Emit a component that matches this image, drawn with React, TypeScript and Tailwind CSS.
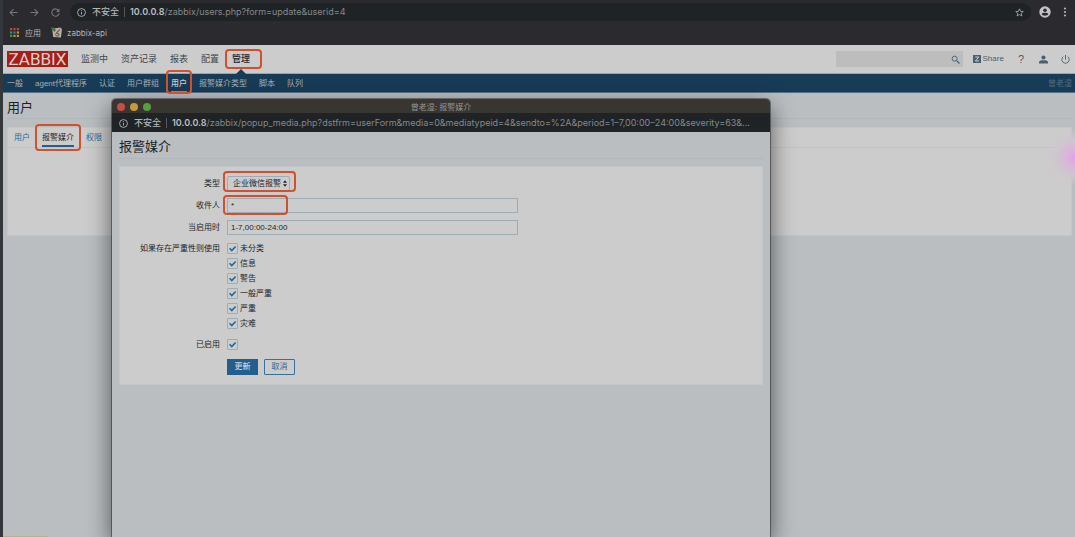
import type { ReactNode } from "react";
import clsx from "clsx";

const topMenu = ["监测中", "资产记录", "报表", "配置", "管理"];
const subMenu = ["一般", "agent代理程序", "认证", "用户群组", "用户", "报警媒介类型", "脚本", "队列"];
const severities = ["未分类", "信息", "警告", "一般严重", "严重", "灾难"];
const appDots = ["#b8473c", "#b8473c", "#b8473c", "#3f9a57", "#4274b8", "#b99a38", "#3f9a57", "#b99a38", "#b99a38"];

const Mark = ({ className }: { className: string }) => (
  <span
    aria-hidden="true"
    className={clsx("pointer-events-none absolute z-10 rounded-[4px] border-2 border-[#cf5130]", className)}
  />
);

const InfoIcon = () => (
  <svg viewBox="0 0 16 16" className="size-[9px] shrink-0" fill="none" stroke="currentColor" strokeWidth="1.6">
    <circle cx="8" cy="8" r="7" />
    <path d="M8 7v4.5M8 4v1.6" />
  </svg>
);

const BrowserBar = () => (
  <header className="flex h-[45px] shrink-0 flex-col bg-[#2b2a2e] font-[Inter,'Noto_Sans_CJK_SC',sans-serif] text-[#b4b4b5]">
    <div className="flex h-6 items-center pl-1.5 pr-2">
      <div className="flex w-[61px] gap-3 text-[#77787a]">
        <button aria-label="后退">
          <svg viewBox="0 0 16 16" className="size-[9px]" fill="none" stroke="currentColor" strokeWidth="1.8">
            <path d="M15 8H2M8 2 2 8l6 6" />
          </svg>
        </button>
        <button aria-label="前进">
          <svg viewBox="0 0 16 16" className="size-[9px]" fill="none" stroke="currentColor" strokeWidth="1.8">
            <path d="M1 8h13M8 2l6 6-6 6" />
          </svg>
        </button>
        <button aria-label="重新加载">
          <svg viewBox="0 0 16 16" className="size-[9px]" fill="none" stroke="currentColor" strokeWidth="1.8">
            <path d="M13.5 4.5A6.5 6.5 0 1 0 14.5 9" />
            <path d="M15 1v6H9z" fill="currentColor" stroke="none" />
          </svg>
        </button>
      </div>
      <div className="flex h-[18px] flex-1 items-center rounded-full bg-[#1f2326] px-[7px] text-[9px]">
        <InfoIcon />
        <span className="ml-1.5 font-medium">不安全</span>
        <span className="mx-[5px] h-2.5 w-px bg-[#55585a]" />
        <span className="flex-1 text-[#85888a]">
          <b className="font-semibold text-[#bdbebf]">10.0.0.8</b>/zabbix/users.php?form=update&amp;userid=4
        </span>
        <button aria-label="收藏">
          <svg viewBox="0 0 16 16" className="size-[9px]" fill="none" stroke="currentColor" strokeWidth="1.4">
            <path d="m8 1.5 1.9 4.4 4.8.4-3.6 3.2 1.1 4.7L8 11.7l-4.2 2.5 1.1-4.7L1.3 6.3l4.8-.4z" />
          </svg>
        </button>
      </div>
      <button aria-label="个人资料" className="ml-2">
        <svg viewBox="0 0 16 16" className="size-3">
          <circle cx="8" cy="8" r="7.6" fill="#c4c4c4" />
          <circle cx="8" cy="5.6" r="2.4" fill="#2b2a2e" />
          <path d="M3.4 10.8c1.4-2.3 7.8-2.3 9.2 0-1.7 3-7.5 3-9.2 0z" fill="#2b2a2e" />
        </svg>
      </button>
      <button aria-label="菜单" className="ml-3">
        <svg viewBox="0 0 8 20" className="h-2.5 w-1 fill-current">
          <circle cx="4" cy="3" r="2.2" />
          <circle cx="4" cy="10" r="2.2" />
          <circle cx="4" cy="17" r="2.2" />
        </svg>
      </button>
    </div>
    <div className="flex h-[17px] items-center pl-[7px] text-[8px]">
      <a href="#apps" className="flex items-center gap-1.5">
        <svg viewBox="0 0 9 9" className="size-[9px]">
          {appDots.map((color, i) => (
            <rect key={i} x={(i % 3) * 3.4} y={Math.floor(i / 3) * 3.4} width="2.2" height="2.2" fill={color} />
          ))}
        </svg>
        应用
      </a>
      <a href="#api" className="ml-2.5 flex items-center gap-[5px]">
        <svg viewBox="0 0 20 20" className="size-[11px]">
          <path d="M2 3 17 1l3 3-2 15-14-1z" fill="#b3b2a8" />
          <path d="M0 1c5-1 8 1 9 5L6 9C4 7 1 5 0 1z" fill="#526f42" />
          <path d="M9 10 16 3l1 2-7 8z" fill="#a8493c" />
          <path d="M7 12c3-2 7-1 9 1l-3 5c-4 0-6-2-6-6z" fill="#58704b" />
          <path d="m8 13 5 2" stroke="#d0cec2" strokeWidth="1.5" />
        </svg>
        zabbix-api
      </a>
    </div>
  </header>
);

const SiteHeader = () => (
  <div className="flex h-[29px] shrink-0 items-center border-b border-[#9aa4aa] bg-[#cccccc] pl-1 pr-[5px]">
    <a
      href="#home"
      className="flex h-4 w-[61px] items-center justify-center bg-[#a81e14] font-[Roboto,sans-serif] text-[17px] leading-4 text-[#d6cfce]"
    >
      ZABBIX
    </a>
    <nav className="ml-[13px] flex h-full gap-[13px] text-[9px] text-[#42474b]">
      {topMenu.map((item) => (
        <a key={item} href="#menu" className={clsx("relative flex items-center pt-0.5", item === "管理" && "font-medium text-[#1c2328]")}>
          {item}
          {item === "管理" && (
            <>
              <span className="absolute -bottom-px left-1/2 -translate-x-1/2 border-x-[5px] border-b-[5px] border-x-transparent border-b-[#183b56]" />
              <Mark className="-left-[7px] -right-3 top-1 h-5" />
            </>
          )}
        </a>
      ))}
    </nav>
    <div className="ml-auto flex items-center text-[#4b5f6c]">
      <label className="flex h-4 w-[127px] items-center bg-[#bdbdbd] pr-[3px]">
        <input type="search" aria-label="搜索" className="h-4 min-w-0 flex-1 bg-transparent px-1 text-[8px] outline-none" />
        <svg viewBox="0 0 16 16" className="size-[9px]" fill="none" stroke="currentColor" strokeWidth="1.6">
          <circle cx="6.5" cy="6.5" r="4.5" />
          <path d="m10 10 5 5" strokeWidth="2.2" />
        </svg>
      </label>
      <a href="#share" className="ml-2.5 flex items-center gap-0.5 text-[8px]">
        <svg viewBox="0 0 8 8" className="size-2">
          <path d="M0 0h8v8H0z" fill="currentColor" />
          <path d="M2.2 2h3.6L2.4 6h3.6" fill="none" stroke="#cccccc" strokeWidth="1" />
        </svg>
        Share
      </a>
      <a href="#help" className="ml-3.5 text-[11px] leading-3">?</a>
      <a href="#profile" aria-label="用户资料" className="ml-[15px]">
        <svg viewBox="0 0 16 16" className="size-[9px] fill-current">
          <circle cx="8" cy="4.5" r="3.7" />
          <path d="M0 15v-3c2-2 4-2.500 6-2.500h4c2 0 4 .5 6 2.500v3z" />
        </svg>
      </a>
      <a href="#logout" aria-label="退出" className="ml-[13px]">
        <svg viewBox="0 0 16 16" className="size-[9px]" fill="none" stroke="currentColor" strokeWidth="1.6">
          <path d="M4 3a6.500 6.500 0 1 0 8 0M8 0v8" />
        </svg>
      </a>
    </div>
  </div>
);

const SubNav = () => (
  <nav className="flex h-[19px] shrink-0 items-stretch gap-3 border-b border-[#567187] bg-[#183b56] pl-1 pr-[3px] text-[8px] text-[#a5b0b9]">
    {subMenu.map((item) => (
      <a key={item} href="#submenu" className={clsx("relative flex items-center pt-0.5", item === "用户" && "font-medium text-[#c8ced3]")}>
        {item}
        {item === "用户" && (
          <>
            <span className="absolute inset-x-0 bottom-0 h-px bg-[#7f94a5]" />
            <Mark className="-inset-x-[5px] -bottom-0.5 -top-1" />
          </>
        )}
      </a>
    ))}
    <span className="ml-auto flex items-center pt-0.5 text-[#526c80]">曾老湿</span>
  </nav>
);

const UserPage = () => (
  <main className="relative flex-1 bg-[#babec1] pl-1 pr-[3px] pt-1">
    <h1 className="flex h-[22px] items-center border-b border-[#b1b6b9] text-[13px] text-[#1c2328]">用户</h1>
    <div className="mt-2 h-[109px] border border-[#c2c6c8] bg-[#cccccc]">
      <div className="flex h-5 gap-3 border-b border-[#c0c3c5] pl-1.5 text-[8px] text-[#286896]">
        <button>用户</button>
        <button className="relative border-b-2 border-[#245d8e] pt-0.5 text-[#1c2328]">
          报警媒介
          <Mark className="-inset-x-[7px] -bottom-[6px] -top-1" />
        </button>
        <button>权限</button>
      </div>
    </div>
    <span className="absolute right-0 top-8 h-[72px] w-7 bg-[radial-gradient(circle_at_100%_45%,#e2a0e4_0,#dbb4db_8px,#cfc6cf_18px,transparent_28px)]" />
    <span className="absolute bottom-0 left-0 h-px w-[45px] bg-[#b8b18b]" />
  </main>
);

const Tick = ({ id, label }: { id: string; label?: string }) => (
  <label htmlFor={id} className="flex h-[15px] items-center gap-0.5">
    <span className="relative flex size-[11px]">
      <input
        id={id}
        type="checkbox"
        defaultChecked
        aria-label={label ?? "已启用"}
        className="peer size-[11px] appearance-none rounded-[1px] border border-[#9dacb5]"
      />
      <svg
        viewBox="0 0 11 11"
        className="pointer-events-none absolute inset-0 hidden peer-checked:block"
        fill="none"
        stroke="#22669c"
        strokeWidth="1.6"
      >
        <path d="m2.600 5.300 2.200 2.200 3.800-4" />
      </svg>
    </span>
    {label}
  </label>
);

type RowProps = {
  label: string;
  htmlFor?: string;
  className?: string;
  children: ReactNode;
};

const FormRow = ({ label, htmlFor, className, children }: RowProps) => (
  <div className={clsx("flex gap-[7px]", className)}>
    <label htmlFor={htmlFor} className="flex h-[15px] w-[100px] shrink-0 items-center justify-end whitespace-nowrap">
      {label}
    </label>
    {children}
  </div>
);

const MediaPopup = () => (
  <section className="absolute bottom-0 left-[109px] right-[305px] top-[99px] flex flex-col overflow-hidden rounded-t-[4px] bg-[#babec1] shadow-[0_8px_24px_rgba(0,0,0,0.6),0_0_0_1px_rgba(70,75,78,0.6)]">
    <div className="relative flex h-3.5 shrink-0 items-center justify-center bg-[#393632] pt-0.5 font-[Inter,'Noto_Sans_CJK_SC',sans-serif] text-[8px] text-[#969593]">
      <div className="absolute left-[5px] flex gap-[5px]">
        <button aria-label="关闭" className="size-2 rounded-full bg-[#c64e48]" />
        <button aria-label="最小化" className="size-2 rounded-full bg-[#c29c38]" />
        <button aria-label="缩放" className="size-2 rounded-full bg-[#55a038]" />
      </div>
      曾老湿: 报警媒介
    </div>
    <div className="flex h-[19px] shrink-0 items-center bg-[#1f2326] px-[7px] pt-px font-[Inter,'Noto_Sans_CJK_SC',sans-serif] text-[9px] text-[#b4b4b5]">
      <InfoIcon />
      <span className="ml-1.5 shrink-0 font-medium">不安全</span>
      <span className="mx-[5px] h-2.5 w-px shrink-0 bg-[#55585a]" />
      <span className="truncate text-[#85888a]">
        <b className="font-semibold text-[#bdbebf]">10.0.0.8</b>
        /zabbix/popup_media.php?dstfrm=userForm&amp;media=0&amp;mediatypeid=4&amp;sendto=%2A&amp;period=1–7,00:00–24:00&amp;severity=63&amp;...
      </span>
    </div>
    <div className="px-[7px] pt-1">
      <h2 className="flex h-[23px] items-center border-b border-[#b1b6b9] text-[13px] text-[#1c2328]">报警媒介</h2>
      <form
        className="mt-[7px] border border-[#c2c6c8] bg-[#cccccc] pb-[9px] pt-[9px] text-[8px] text-[#1c2328]"
        onSubmit={(e) => e.preventDefault()}
      >
        <FormRow label="类型" htmlFor="type">
          <div className="relative">
            <select
              id="type"
              className="h-[15px] w-[63px] appearance-none rounded-[2px] border border-[#9dacb5] bg-transparent pl-[5px] leading-3"
            >
              <option>企业微信报警</option>
            </select>
            <svg viewBox="0 0 6 10" className="pointer-events-none absolute right-[3px] top-1 h-[7px] w-1 fill-[#1c2328]">
              <path d="m3 0 3 4H0zM3 10l3-4H0z" />
            </svg>
            <Mark className="-left-1 -right-[6px] -top-[5px] h-[21px]" />
          </div>
        </FormRow>
        <FormRow label="收件人" htmlFor="sendto" className="mt-[7px]">
          <div className="relative w-[291px]">
            <input id="sendto" defaultValue="*" className="block h-[15px] w-full border border-[#9dacb5] bg-transparent px-[3px]" />
            <Mark className="-left-1 -top-[3px] h-5 w-[65px]" />
          </div>
        </FormRow>
        <FormRow label="当启用时" htmlFor="period" className="mt-[7px]">
          <input id="period" defaultValue="1-7,00:00-24:00" className="h-[15px] w-[291px] border border-[#9dacb5] bg-transparent px-[3px]" />
        </FormRow>
        <FormRow label="如果存在严重性则使用" className="mt-1.5">
          <div>
            {severities.map((name) => (
              <Tick key={name} id={`severity-${name}`} label={name} />
            ))}
          </div>
        </FormRow>
        <FormRow label="已启用" htmlFor="enabled" className="mt-1.5">
          <Tick id="enabled" />
        </FormRow>
        <div className="ml-[107px] mt-[7px] flex gap-1.5">
          <button type="submit" className="h-4 w-[31px] border border-[#245d8e] bg-[#245d8e] font-medium leading-3 text-[#c6d2dc]">
            更新
          </button>
          <button type="button" className="h-4 w-[31px] rounded-[1px] border border-[#387099] leading-3 text-[#286896]">
            取消
          </button>
        </div>
      </form>
    </div>
  </section>
);

export default function App() {
  return (
    <div className="relative flex h-screen flex-col overflow-hidden border-l-[3px] border-[#34383d] font-['Liberation_Sans','Noto_Sans_CJK_SC',sans-serif]">
      <BrowserBar />
      <SiteHeader />
      <SubNav />
      <UserPage />
      <MediaPopup />
    </div>
  );
}
